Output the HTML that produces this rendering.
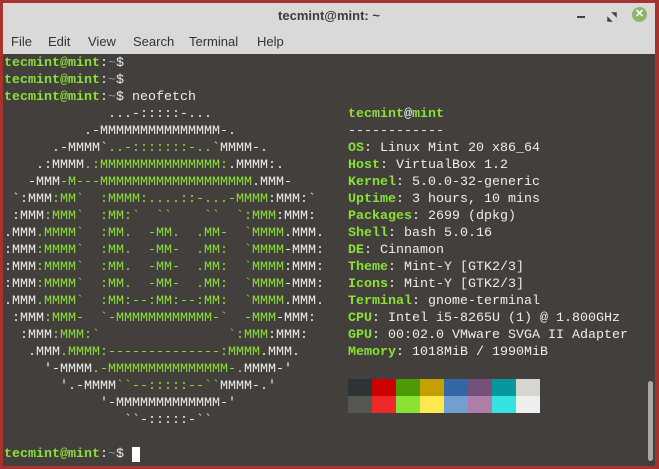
<!DOCTYPE html>
<html><head><meta charset="utf-8">
<style>
html,body{margin:0;padding:0;width:659px;height:469px;overflow:hidden;background:#a8322e;}
#win{position:absolute;left:3px;top:3px;width:652px;height:463px;background:#423f3c;}
#title{position:absolute;left:0;top:0;width:652px;height:51px;background:#d9d9d9;}
#title .t{position:absolute;left:0;width:652px;top:5px;text-align:center;font:bold 13px "Liberation Sans",sans-serif;color:#3c3c3c;}
#menu{position:absolute;top:31px;left:0;font:13px "Liberation Sans",sans-serif;color:#333;}
#menu span{position:absolute;white-space:nowrap;}
pre{position:absolute;margin:0;font:13.33px/17px "Liberation Mono",monospace;color:#eeeeec;white-space:pre;}
.g{color:#8ae234;font-weight:bold}
.gn{color:#8ae234}
.pal{position:absolute;width:24px;height:17px;}
</style></head><body>
<div id="win">
<div id="title"><div class="t">tecmint@mint: ~</div>
<div style="position:absolute;left:574px;top:13px;width:8px;height:2px;background:#444"></div>
<svg style="position:absolute;left:603px;top:8px" width="12" height="12"><path d="M2 7 L2 10 L5 10 Z M10 5 L10 2 L7 2 Z" fill="#444" stroke="#444" stroke-width="1.5"/></svg>
<div style="position:absolute;left:629px;top:4px;width:15px;height:15px;border-radius:50%;background:#8db56a;color:#fff;font:bold 11px/15px 'Liberation Sans',sans-serif;text-align:center">✕</div>
<div id="menu">
<span style="left:8px">File</span><span style="left:45px">Edit</span><span style="left:85px">View</span><span style="left:130px">Search</span><span style="left:186px">Terminal</span><span style="left:254px">Help</span>
</div></div>
<pre style="left:1px;top:52px"><span class="g">tecmint@mint</span>:<span style="color:#729fcf">~</span>$
<span class="g">tecmint@mint</span>:<span style="color:#729fcf">~</span>$
<span class="g">tecmint@mint</span>:<span style="color:#729fcf">~</span>$ neofetch
             ...-:::::-...
          .-MMMMMMMMMMMMMMM-.
      .-MMMM`<span class="gn">..-:::::::-..</span>`MMMM-.
    .:MMMM<span class="gn">.:MMMMMMMMMMMMMMM:</span>.MMMM:.
   -MMM<span class="gn">-M---MMMMMMMMMMMMMMMMMMM</span>.MMM-
 `:MMM<span class="gn">:MM`  :MMMM:....::-...-MMMM</span>:MMM:`
 :MMM<span class="gn">:MMM`  :MM:`  ``    ``  `:MMM</span>:MMM:
.MMM<span class="gn">.MMMM`  :MM.  -MM.  .MM-  `MMMM</span>.MMM.
:MMM<span class="gn">:MMMM`  :MM.  -MM-  .MM:  `MMMM</span>-MMM:
:MMM<span class="gn">:MMMM`  :MM.  -MM-  .MM:  `MMMM</span>:MMM:
:MMM<span class="gn">:MMMM`  :MM.  -MM-  .MM:  `MMMM</span>-MMM:
.MMM<span class="gn">.MMMM`  :MM:--:MM:--:MM:  `MMMM</span>.MMM.
 :MMM<span class="gn">:MMM-  `-MMMMMMMMMMMM-`  -MMM</span>-MMM:
  :MMM<span class="gn">:MMM:`                `:MMM</span>:MMM:
   .MMM<span class="gn">.MMMM:--------------:MMMM</span>.MMM.
     '-MMMM<span class="gn">.-MMMMMMMMMMMMMMM-.</span>MMMM-'
       '.-MMMM<span class="gn">``--:::::--``</span>MMMM-.'
            '-MMMMMMMMMMMMM-'
               ``-:::::-``

<span class="g">tecmint@mint</span>:<span style="color:#729fcf">~</span>$ <span style="background:#fff"> </span></pre>
<pre style="left:345px;top:103px"><span class="g">tecmint</span>@<span class="g">mint</span>
------------
<span class="g">OS</span>: Linux Mint 20 x86_64
<span class="g">Host</span>: VirtualBox 1.2
<span class="g">Kernel</span>: 5.0.0-32-generic
<span class="g">Uptime</span>: 3 hours, 10 mins
<span class="g">Packages</span>: 2699 (dpkg)
<span class="g">Shell</span>: bash 5.0.16
<span class="g">DE</span>: Cinnamon
<span class="g">Theme</span>: Mint-Y [GTK2/3]
<span class="g">Icons</span>: Mint-Y [GTK2/3]
<span class="g">Terminal</span>: gnome-terminal
<span class="g">CPU</span>: Intel i5-8265U (1) @ 1.800GHz
<span class="g">GPU</span>: 00:02.0 VMware SVGA II Adapter
<span class="g">Memory</span>: 1018MiB / 1990MiB</pre>
<div class="pal" style="left:345px;top:376px;background:#2e3436"></div>
<div class="pal" style="left:369px;top:376px;background:#cc0000"></div>
<div class="pal" style="left:393px;top:376px;background:#4e9a06"></div>
<div class="pal" style="left:417px;top:376px;background:#c4a000"></div>
<div class="pal" style="left:441px;top:376px;background:#3465a4"></div>
<div class="pal" style="left:465px;top:376px;background:#75507b"></div>
<div class="pal" style="left:489px;top:376px;background:#06989a"></div>
<div class="pal" style="left:513px;top:376px;background:#d3d7cf"></div>
<div class="pal" style="left:345px;top:393px;background:#555753"></div>
<div class="pal" style="left:369px;top:393px;background:#ef2929"></div>
<div class="pal" style="left:393px;top:393px;background:#8ae234"></div>
<div class="pal" style="left:417px;top:393px;background:#fce94f"></div>
<div class="pal" style="left:441px;top:393px;background:#729fcf"></div>
<div class="pal" style="left:465px;top:393px;background:#ad7fa8"></div>
<div class="pal" style="left:489px;top:393px;background:#34e2e2"></div>
<div class="pal" style="left:513px;top:393px;background:#eeeeec"></div>
<div style="position:absolute;left:645px;top:378px;width:5px;height:80px;border-radius:3px;background:#a8a8a8"></div>
</div>
</body></html>
